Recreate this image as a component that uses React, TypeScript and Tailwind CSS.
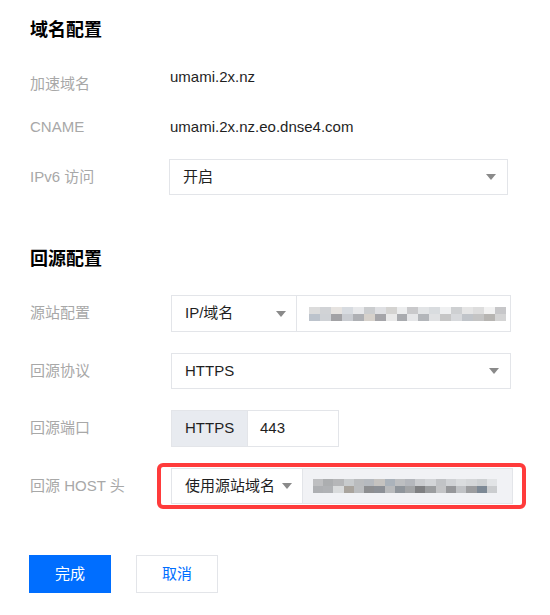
import React from "react";

const font = { fontFamily: '"Liberation Sans", "Noto Sans CJK SC", sans-serif' };

// pixelated placeholder for blurred-out values
const Blurred = ({ cells, w }: { cells: string[]; w: number }) => (
  <div className="flex flex-col blur-[0.5px]" style={{ width: w }}>
    <div className="flex h-[7px]">
      {cells.map((c, i) => (
        <span key={i} className="flex-1" style={{ backgroundColor: c, opacity: 0.6 }} />
      ))}
    </div>
    <div className="flex h-[7px]">
      {cells.map((c, i) => (
        <span key={i} className="flex-1" style={{ backgroundColor: cells[(i * 7 + 3) % cells.length] }} />
      ))}
    </div>
  </div>
);

const Arrow = () => (
  <svg width="10" height="6" viewBox="0 0 10 6" className="shrink-0">
    <path d="M0 0h10L5 6z" fill="#8a8a8a" />
  </svg>
);

const Label = ({ children }: { children: React.ReactNode }) => (
  <div className="w-[141px] shrink-0 text-[15px] text-[#a8a8a8]">{children}</div>
);

const grayA = ["#c4c4c4", "#b3b6ba", "#d6d1cb", "#bcc3cc", "#d7d9dc", "#a9abaf", "#c9ccd1", "#b7b5b2", "#e0e1e3", "#a5a5a9", "#cfd2d6", "#c0c4c9", "#e5e6e8", "#aeb0b4", "#d4d4d4", "#c6c6c6", "#e9e9e9", "#a2a2a5"];
const grayB = ["#9c9d9f", "#7f8082", "#8d8e90", "#aeb0b3", "#96979a", "#8f959b", "#a9a49d", "#7d8995", "#9b9d9f", "#8c9096", "#b0b2b5", "#c0c2c5", "#a2a4a6", "#bbbdbf", "#cbcdcf", "#c3c4c6", "#b8babc", "#d9dbdc"];

export default function App() {
  return (
    <div className="w-[550px] h-[615px] bg-white pl-[30px] pt-[18px] text-[#1f1f1f]" style={font}>
      <h2 className="h-[24px] text-[18px] font-bold leading-[24px] text-black">域名配置</h2>

      <div className="mt-[24px] flex h-[36px] items-center">
        <Label>加速域名</Label>
        <span className="-ml-[1px] mb-[14px] text-[15px]">umami.2x.nz</span>
      </div>
      <div className="mt-[7px] flex h-[36px] items-center">
        <Label>CNAME</Label>
        <span className="-ml-[1px] text-[15px]">umami.2x.nz.eo.dnse4.com</span>
      </div>
      <div className="mt-[14px] flex h-[36px] items-center">
        <Label>IPv6 访问</Label>
        <div className="-ml-[2px] flex h-[36px] w-[339px] items-center justify-between border border-[#e3e5e9] pl-[13px] pr-[11px] text-[15px]">
          <span>开启</span>
          <Arrow />
        </div>
      </div>

      <h2 className="mt-[52px] h-[24px] text-[18px] font-bold leading-[24px] text-black">回源配置</h2>

      <div className="mt-[24px] flex h-[37px] items-center">
        <Label>源站配置</Label>
        <div className="flex h-[37px] w-[340px] border border-[#e3e5e9]">
          <div className="flex w-[125px] items-center justify-between border-r border-[#e3e5e9] pl-[13px] pr-[10px] text-[15px]">
            <span>IP/域名</span>
            <Arrow />
          </div>
          <div className="flex flex-1 items-center pl-[12px]">
            <Blurred cells={grayA} w={197} />
          </div>
        </div>
      </div>

      <div className="mt-[21px] flex h-[36px] items-center">
        <Label>回源协议</Label>
        <div className="flex h-[36px] w-[340px] items-center justify-between border border-[#e3e5e9] pl-[13px] pr-[11px] text-[15px]">
          <span>HTTPS</span>
          <Arrow />
        </div>
      </div>

      <div className="mt-[21px] flex h-[37px] items-center">
        <Label>回源端口</Label>
        <div className="flex h-[37px] w-[168px] border border-[#e3e5e9] text-[15px]">
          <div className="flex w-[75px] items-center bg-[#e8ebf0] pl-[13px]">HTTPS</div>
          <div className="flex flex-1 items-center border-l border-[#e3e5e9] pl-[12px]">443</div>
        </div>
      </div>

      <div className="mt-[16px] flex h-[46px] items-center">
        <Label>回源 HOST 头</Label>
        <div className="-ml-[14px] rounded-[6px] border-4 border-[#ff3b3b] pb-[1px] pl-[10px] pr-[9px] pt-[1px]">
          <div className="flex h-[36px] w-[342px] border border-[#e3e5e9]">
            <div className="flex w-[131px] items-center justify-between border-r border-[#e3e5e9] pl-[13px] pr-[10px] text-[15px]">
              <span>使用源站域名</span>
              <Arrow />
            </div>
            <div className="flex flex-1 items-center bg-[#f1f2f5] pl-[10px]">
              <Blurred cells={grayB} w={184} />
            </div>
          </div>
        </div>
      </div>

      <div className="mt-[46px] flex gap-[25px] -ml-[1px]">
        <button className="h-[38px] w-[82px] bg-[#006eff] text-[15px] text-white">完成</button>
        <button className="h-[38px] w-[82px] border border-[#e3e5e9] bg-white text-[15px] text-[#006eff]">取消</button>
      </div>
    </div>
  );
}
